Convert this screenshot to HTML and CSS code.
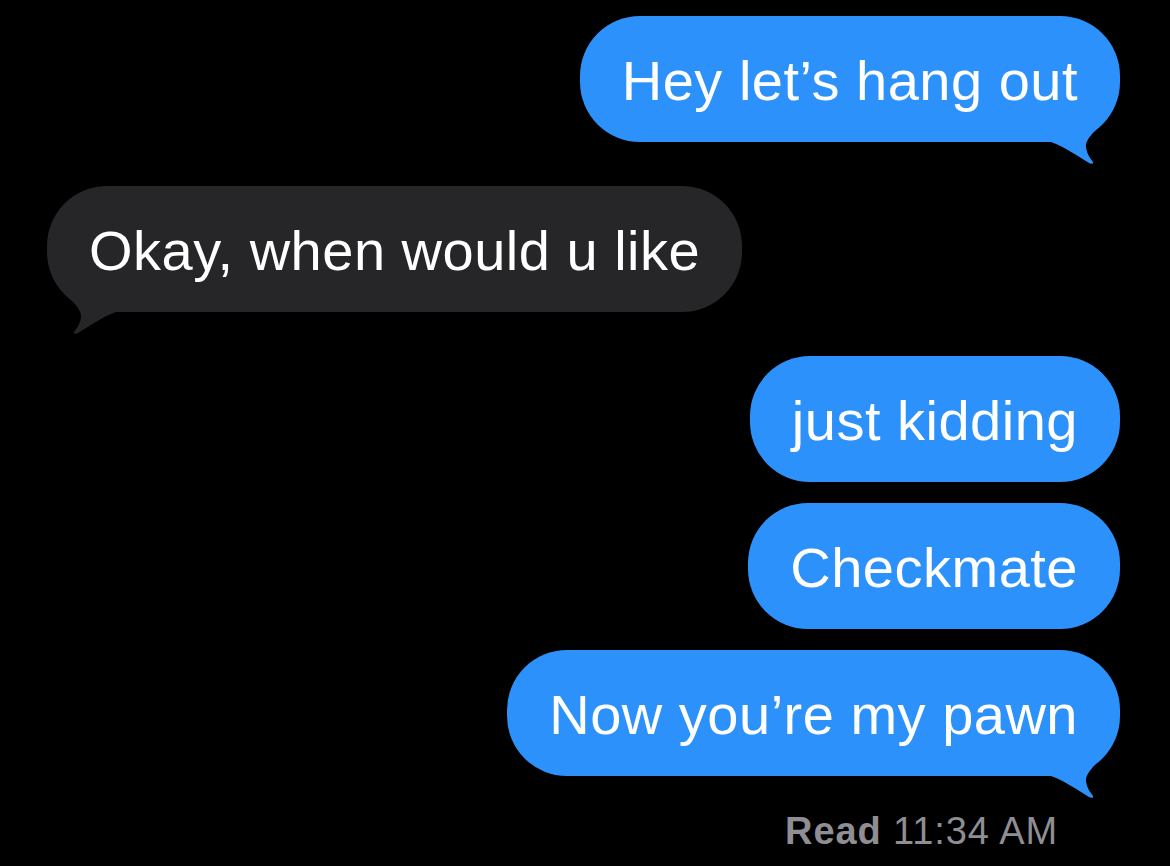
FILE: index.html
```html
<!DOCTYPE html>
<html lang="en">
<head>
<meta charset="utf-8">
<title>Messages</title>
<link rel="stylesheet" href="styles.css">
</head>
<body>
<main class="thread">
  <div class="msg sent tailed">
    <div class="bubble">Hey let’s hang out
      <svg class="tail" viewBox="0 0 60 50" width="60" height="50"><path d="M0 0 H60 V6 C52 14 40 24 41 32 C42 40 46 44 48 47 C49 49 46 49 44 48 C32 41 22 33 6 27 H0 Z"/></svg>
    </div>
  </div>
  <div class="msg received tailed">
    <div class="bubble">Okay, when would u like
      <svg class="tail" viewBox="0 0 60 50" width="60" height="50"><path d="M0 0 H60 V6 C52 14 40 24 41 32 C42 40 46 44 48 47 C49 49 46 49 44 48 C32 41 22 33 6 27 H0 Z"/></svg>
    </div>
  </div>
  <div class="msg sent">
    <div class="bubble">just kidding</div>
  </div>
  <div class="msg sent">
    <div class="bubble">Checkmate</div>
  </div>
  <div class="msg sent tailed final">
    <div class="bubble">Now you’re my pawn
      <svg class="tail" viewBox="0 0 60 50" width="60" height="50"><path d="M0 0 H60 V6 C52 14 40 24 41 32 C42 40 46 44 48 47 C49 49 46 49 44 48 C32 41 22 33 6 27 H0 Z"/></svg>
    </div>
  </div>
  <div class="receipt"><span class="receipt-label">Read</span> 11:34 AM</div>
</main>
</body>
</html>
```

FILE: styles.css
```css
html, body {
  margin: 0;
  padding: 0;
  background: #000;
}

body {
  width: 1170px;
  height: 866px;
  overflow: hidden;
  font-family: "Liberation Sans", Arial, sans-serif;
  -webkit-font-smoothing: antialiased;
}

.thread {
  display: flex;
  flex-direction: column;
  padding: 16px 50px 0 47px;
}

.msg {
  display: flex;
  margin-bottom: 21px;
}

.msg.tailed {
  margin-bottom: 44px;
}

.msg.final {
  margin-bottom: 33px;
}

.msg.sent {
  justify-content: flex-end;
}

.msg.received {
  justify-content: flex-start;
}

.bubble {
  position: relative;
  font-size: 56px;
  line-height: 66px;
  letter-spacing: 0.5px;
  padding: 32px 42px 28px 42px;
  border-radius: 60px;
  color: #fff;
  white-space: nowrap;
}

.sent .bubble {
  background: #2c91fa;
}

.received .bubble {
  background: #262628;
}

.tail {
  position: absolute;
  bottom: -23px;
  display: block;
}

.sent .tail {
  right: 15px;
  fill: #2c91fa;
}

.received .tail {
  left: 15px;
  transform: scaleX(-1);
  fill: #262628;
}

.receipt {
  align-self: flex-end;
  margin-right: 62px;
  font-size: 38px;
  line-height: 44px;
  letter-spacing: 0.9px;
  color: #8e8e93;
}

.receipt-label {
  font-weight: bold;
}
```
